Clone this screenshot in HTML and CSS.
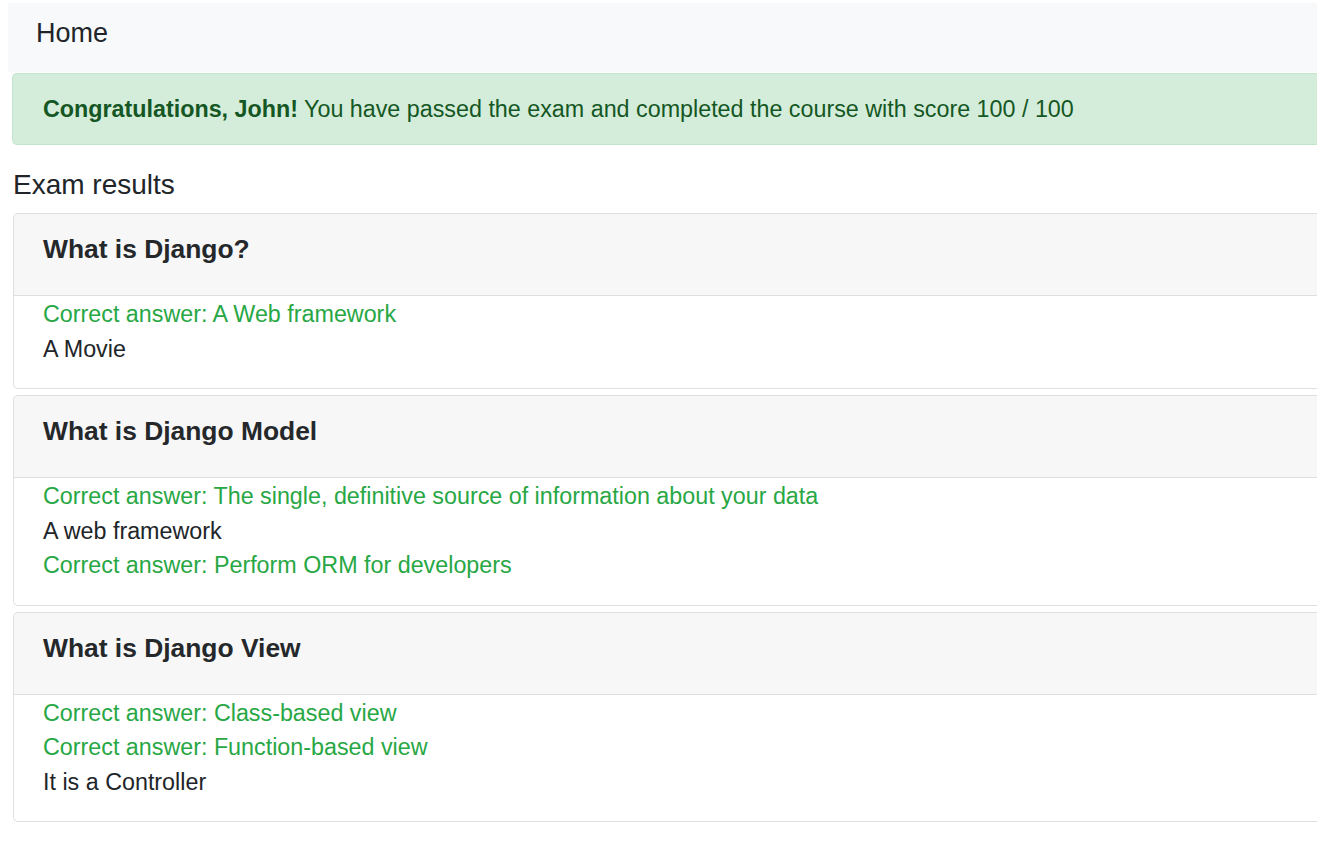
FILE: index.html
```html
<!DOCTYPE html>
<html lang="en">
<head>
<meta charset="utf-8">
<title>Exam results</title>
<link rel="stylesheet" href="styles.css">
</head>
<body>
<nav class="navbar">
  <a class="brand" href="#">Home</a>
</nav>
<main class="content">
  <div class="alert"><p><b>Congratulations, John!</b> You have passed the exam and completed the course with score 100 / 100</p></div>
  <h4 class="section-title">Exam results</h4>
  <div class="card">
    <div class="card-header"><h5>What is Django?</h5></div>
    <div class="card-body">
      <div class="answer correct">Correct answer: A Web framework</div>
      <div class="answer">A Movie</div>
    </div>
  </div>
  <div class="card">
    <div class="card-header"><h5>What is Django Model</h5></div>
    <div class="card-body">
      <div class="answer correct">Correct answer: The single, definitive source of information about your data</div>
      <div class="answer">A web framework</div>
      <div class="answer correct">Correct answer: Perform ORM for developers</div>
    </div>
  </div>
  <div class="card">
    <div class="card-header"><h5>What is Django View</h5></div>
    <div class="card-body">
      <div class="answer correct">Correct answer: Class-based view</div>
      <div class="answer correct">Correct answer: Function-based view</div>
      <div class="answer">It is a Controller</div>
    </div>
  </div>
</main>
</body>
</html>
```
FILE: styles.css
```css
* { box-sizing: border-box; }

html, body { background: #fff; }

body {
  margin: 3px 23px 0 8px;
  font-family: "Liberation Sans", Arial, Helvetica, sans-serif;
  font-size: 23.3px;
  line-height: 34.5px;
  color: #212529;
}

.navbar {
  height: 69px;
  padding: 13px 0 0 28px;
  background: #f8f9fa;
}

.brand {
  font-size: 27px;
  line-height: 34px;
  color: #212529;
  text-decoration: none;
}

.content {
  padding: 1px 0 0 4px;
}

.alert {
  display: flex;
  align-items: center;
  height: 72px;
  padding: 0 30px;
  background: #d4edda;
  border: 1px solid #c3e6cb;
  border-right: 0;
  border-radius: 5px 0 0 5px;
  color: #155724;
}

.alert p { margin: 0; }
.alert b { font-weight: 700; }

.section-title {
  margin: 23px 0 11px 1px;
  font-size: 28px;
  line-height: 34px;
  font-weight: 400;
  color: #212529;
}

.card {
  margin: 0 0 6px 1px;
  border: 1px solid #dfdfdf;
  border-right: 0;
  border-radius: 5px 0 0 5px;
  background: #fff;
}

.card-header {
  height: 82px;
  padding: 21px 29px 0;
  background: #f7f7f7;
  border-bottom: 1px solid #dfdfdf;
  border-radius: 4px 0 0 0;
}

.card-header h5 {
  margin: 0;
  font-size: 26.4px;
  line-height: 29px;
  font-weight: 700;
  color: #25282b;
}

.card-body {
  padding: 1px 29px 22px;
}

.answer { color: #212529; }
.answer.correct { color: #28a745; }
```
